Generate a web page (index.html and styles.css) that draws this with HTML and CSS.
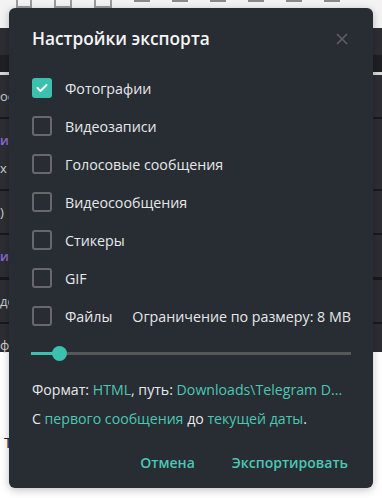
FILE: index.html
```html
<!DOCTYPE html>
<html lang="ru">
<head>
    <meta charset="UTF-8">
    <meta name="viewport" content="width=device-width, initial-scale=1.0">
    <title>Настройки экспорта</title>
    <link rel="stylesheet" href="styles.css">
</head>
<body>
    <!-- окно приложения за диалогом -->
    <div class="app">
        <div class="toolbar">
            <span class="tool"></span>
            <span class="tool tool-box"></span>
            <span class="tool tool-box"></span>
            <span class="tool-lines"></span>
            <span class="tool-lines"></span>
            <span class="tool-lines"></span>
            <span class="tool-lines"></span>
            <span class="tool-lines"></span>
            <span class="tool-lines"></span>
        </div>
        <div class="app-body">
            <div class="chat-strip">
                <div class="strip-pic"></div>
                <div class="strip-row">ое</div>
                <div class="strip-bar"></div>
                <div class="strip-row accent">и</div>
                <div class="strip-row">х</div>
                <div class="strip-bar"></div>
                <div class="strip-row">)</div>
                <div class="strip-bar"></div>
                <div class="strip-row accent">и</div>
                <div class="strip-bar"></div>
                <div class="strip-row">де</div>
                <div class="strip-bar"></div>
                <div class="strip-row">ф</div>
            </div>
            <div class="page">Т</div>
        </div>
    </div>

    <div class="dialog">
        <div class="dialog-head">
            <h2 class="dialog-title">Настройки экспорта</h2>
            <button class="close" aria-label="Закрыть">
                <svg width="12" height="12" viewBox="0 0 12 12">
                    <path d="M1 1 L11 11 M11 1 L1 11" stroke="#5d6166" stroke-width="1.6" fill="none"/>
                </svg>
            </button>
        </div>

        <ul class="options">
            <li class="option">
                <span class="check checked">
                    <svg width="12" height="10" viewBox="0 0 12 10">
                        <path d="M1.5 5 L4.5 8 L10.5 2" stroke="#fff" stroke-width="2" fill="none" stroke-linecap="round" stroke-linejoin="round"/>
                    </svg>
                </span>
                <span class="label">Фотографии</span>
            </li>
            <li class="option"><span class="check"></span><span class="label">Видеозаписи</span></li>
            <li class="option"><span class="check"></span><span class="label">Голосовые сообщения</span></li>
            <li class="option"><span class="check"></span><span class="label">Видеосообщения</span></li>
            <li class="option"><span class="check"></span><span class="label">Стикеры</span></li>
            <li class="option"><span class="check"></span><span class="label">GIF</span></li>
            <li class="option">
                <span class="check"></span><span class="label">Файлы</span>
                <span class="size-limit">Ограничение по размеру: 8 MB</span>
            </li>
        </ul>

        <div class="slider">
            <div class="slider-fill" style="width: 29px"></div>
            <span class="slider-thumb"></span>
        </div>

        <p class="info">Формат: <a href="#">HTML</a>, путь: <a href="#">Downloads\Telegram D...</a></p>
        <p class="info">С <a href="#">первого сообщения</a> до <a href="#">текущей даты</a>.</p>

        <div class="actions">
            <button class="btn">Отмена</button>
            <button class="btn">Экспортировать</button>
        </div>
    </div>
</body>
</html>
```

FILE: styles.css
```css
body {
    font-family: 'Open Sans', 'Noto Sans', sans-serif;
    margin: 0;
    padding: 0;
    width: 382px;
    height: 498px;
    overflow: hidden;
    background-color: #ffffff;
}
.app {
    height: 498px;
    display: flex;
    flex-direction: column;
}
.toolbar {
    height: 28px;
    background-color: #f3f3f3;
    display: flex;
    gap: 22px;
    padding-left: 16px;
    align-items: flex-start;
}
.tool {
    width: 12px;
    height: 6px;
    border: 2px solid #9a9a9a;
    border-top: none;
}
.tool-box {
    border: 2px solid #9a9a9a;
    border-top: none;
    width: 14px;
}
.tool-lines {
    width: 16px;
    height: 6px;
    border-top: 2px solid #8a8a8a;
    border-bottom: 2px solid #8a8a8a;
}
.app-body {
    flex: 1;
    display: flex;
    flex-direction: column;
}
.chat-strip {
    height: 324px;
    background-color: #2c2e33;
    color: #cfcfcf;
    font-size: 13px;
    display: flex;
    flex-direction: column;
    gap: 14px;
}
.strip-pic {
    height: 44px;
    margin-top: 27px;
    background: linear-gradient(135deg, #1f2024 55%, #c4463c 56%, #c4463c 62%, #1f2024 63%);
    border-bottom: 3px solid #d8d8d8;
}
.strip-row {
    line-height: 14px;
}
.strip-row.accent {
    color: #8f6ad8;
    font-weight: 600;
}
.strip-bar {
    height: 6px;
    background-color: #18191c;
}
.page {
    flex: 1;
    padding: 80px 0 0 4px;
    font-size: 15px;
    color: #222;
}

/* диалог поверх окна */
.dialog {
    position: absolute;
    left: 9px;
    top: 8px;
    width: 364px;
    height: 480px;
    box-sizing: border-box;
    padding: 0 25px 0 23px;
    background-color: #282c33;
    border-radius: 6px;
    box-shadow: 0 2px 8px rgba(0,0,0,0.25);
    display: flex;
    flex-direction: column;
    overflow: hidden;
}
.dialog-head {
    display: flex;
    justify-content: space-between;
    align-items: center;
    height: 61px;
}
.dialog-title {
    margin: 0;
    font-size: 17.3px;
    font-weight: 600;
    color: #f5f5f5;
}
.close {
    background: none;
    border: none;
    padding: 0;
    width: 12px;
    height: 12px;
    display: flex;
}
.options {
    list-style: none;
    margin: 0;
    padding: 0;
}
.option {
    height: 38px;
    display: flex;
    align-items: center;
    font-size: 14.25px;
    color: #e6e8ea;
}
.check {
    width: 20px;
    height: 20px;
    box-sizing: border-box;
    border: 2px solid #66686c;
    border-radius: 3px;
    margin-right: 13px;
    display: flex;
    align-items: center;
    justify-content: center;
}
.check.checked {
    border: none;
    background-color: #3bc1ad;
}
.size-limit {
    margin-left: auto;
    margin-right: -3px;
}
.slider {
    position: relative;
    height: 3px;
    margin: 17px -3px 0 -1px;
    background-color: #565759;
}
.slider-fill {
    height: 3px;
    background-color: #3bc1ad;
}
.slider-thumb {
    position: absolute;
    left: 21px;
    top: -6px;
    width: 15px;
    height: 15px;
    border-radius: 50%;
    background-color: #3bc1ad;
}
.info {
    margin: 0;
    font-size: 14.15px;
    color: #e6e8ea;
    line-height: 29.5px;
}
.info:first-of-type {
    margin-top: 19.5px;
}
.info a {
    color: #4cc7b3;
    text-decoration: none;
}
.actions {
    display: flex;
    justify-content: flex-end;
    gap: 37px;
    margin-top: 19px;
}
.btn {
    background: none;
    border: none;
    padding: 0;
    font-family: inherit;
    font-size: 14px;
    font-weight: 600;
    color: #4cc7b3;
    cursor: pointer;
}
```
